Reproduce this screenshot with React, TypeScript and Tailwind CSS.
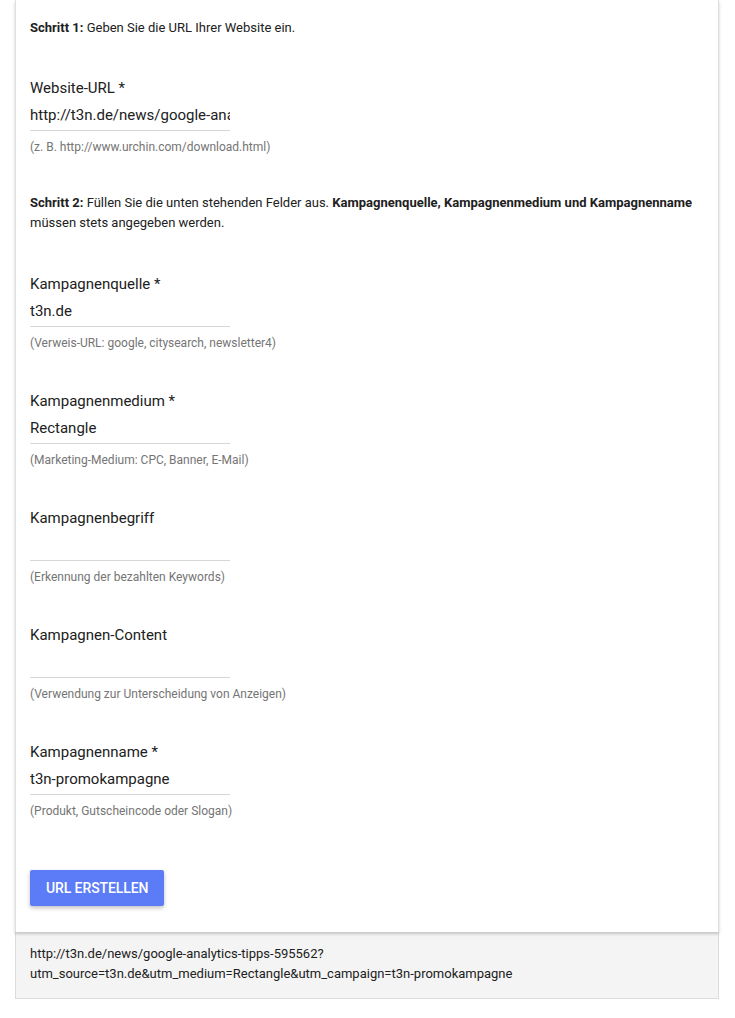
import React from "react"

interface Field {
  label: string
  value: string
  hint: string
}

const fields: Field[] = [
  { label: "Kampagnenquelle *", value: "t3n.de", hint: "(Verweis-URL: google, citysearch, newsletter4)" },
  { label: "Kampagnenmedium *", value: "Rectangle", hint: "(Marketing-Medium: CPC, Banner, E-Mail)" },
  { label: "Kampagnenbegriff", value: "", hint: "(Erkennung der bezahlten Keywords)" },
  { label: "Kampagnen-Content", value: "", hint: "(Verwendung zur Unterscheidung von Anzeigen)" },
  { label: "Kampagnenname *", value: "t3n-promokampagne", hint: "(Produkt, Gutscheincode oder Slogan)" },
]

function FormField({ field, className = "" }: { field: Field; className?: string }) {
  return (
    <div className={className}>
      <div className="h-[20px] text-[15px] leading-[20px] text-[#212121]">{field.label}</div>
      <div className="w-[200px] h-[33px] pt-[5px] pb-[3px] border-b border-[#d6d6d6] overflow-hidden">
        <div className="h-[24px] text-[15px] leading-[24px] text-[#212121] whitespace-nowrap overflow-hidden">
          {field.value}
        </div>
      </div>
      <div className="mt-[8px] text-[12px] leading-[16px] text-[#757575]">{field.hint}</div>
    </div>
  )
}

export default function App() {
  return (
    <div
      className="bg-white min-h-[1018px] pl-[15px] pr-[16px] pb-[19px]"
      style={{ fontFamily: "Roboto, 'Liberation Sans', sans-serif" }}
    >
      <div className="border-x border-[#e0e0e0] bg-white pl-[14px] pr-[14px] pt-[18px] pb-[26px] shadow-[0_2px_3px_rgba(0,0,0,0.2)] relative z-10">
        <p className="text-[13px] leading-[20px] text-[#212121]">
          <span className="font-bold">Schritt 1:</span> Geben Sie die URL Ihrer Website ein.
        </p>

        <FormField
          className="mt-[40px]"
          field={{
            label: "Website-URL *",
            value: "http://t3n.de/news/google-analytics-tipps-595562",
            hint: "(z. B. http://www.urchin.com/download.html)",
          }}
        />

        <p className="mt-[38px] text-[13px] leading-[20px] text-[#212121]">
          <span className="font-bold">Schritt 2:</span> Füllen Sie die unten stehenden Felder aus.{" "}
          <span className="font-bold">Kampagnenquelle, Kampagnenmedium und Kampagnenname</span> müssen stets
          angegeben werden.
        </p>

        <div className="mt-[41px] flex flex-col gap-[40px]">
          {fields.map((f) => (
            <FormField key={f.label} field={f} />
          ))}
        </div>

        <button className="mt-[51px] h-[36px] px-[16px] rounded-[2px] bg-[#5b7cf6] text-white text-[14px] font-medium tracking-[-0.1px] shadow-[0_2px_4px_rgba(0,0,0,0.25)]">
          URL ERSTELLEN
        </button>
      </div>

      <div className="border-x border-b border-[#dcdcdc] bg-[#f4f4f4] pl-[14px] pt-[12px] pb-[14px] text-[13px] leading-[20px] text-[#212121]">
        <div>http://t3n.de/news/google-analytics-tipps-595562?</div>
        <div>utm_source=t3n.de&amp;utm_medium=Rectangle&amp;utm_campaign=t3n-promokampagne</div>
      </div>
    </div>
  )
}
